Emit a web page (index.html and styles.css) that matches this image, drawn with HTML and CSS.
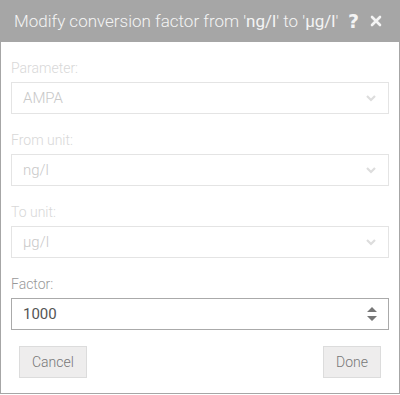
FILE: index.html
```html
<!DOCTYPE html>
<html>
<head>
<meta charset="utf-8">
<link rel="stylesheet" href="styles.css">
</head>
<body>
<div class="dialog">
  <div class="header">
    <div class="title">Modify conversion factor from '<span class="val">ng/l</span>' to '<span class="val">µg/l</span>'</div>
    <div class="tools">
      <span class="tool">?</span>
      <svg class="tool-x" width="12" height="12" viewBox="0 0 12 12"><path d="M2 2 L10 10 M10 2 L2 10" stroke="#f4f4f4" stroke-width="2.6" stroke-linecap="round"/></svg>
    </div>
  </div>
  <div class="body">
    <div class="field disabled">
      <label>Parameter:</label>
      <div class="box"><span>AMPA</span><svg class="chev" width="10" height="8" viewBox="0 0 10 8"><path d="M1 2 L5 6 L9 2" fill="none" stroke="#ddd" stroke-width="2.2"/></svg></div>
    </div>
    <div class="field disabled">
      <label>From unit:</label>
      <div class="box"><span>ng/l</span><svg class="chev" width="10" height="8" viewBox="0 0 10 8"><path d="M1 2 L5 6 L9 2" fill="none" stroke="#ddd" stroke-width="2.2"/></svg></div>
    </div>
    <div class="field disabled">
      <label>To unit:</label>
      <div class="box"><span>µg/l</span><svg class="chev" width="10" height="8" viewBox="0 0 10 8"><path d="M1 2 L5 6 L9 2" fill="none" stroke="#ddd" stroke-width="2.2"/></svg></div>
    </div>
    <div class="field active last">
      <label>Factor:</label>
      <div class="box"><span>1000</span><svg class="spin" width="10" height="16" viewBox="0 0 10 16"><path d="M5 1 L10 6 L0 6 Z M0 10 L10 10 L5 15 Z" fill="#777"/></svg></div>
    </div>
    <div class="buttons">
      <button class="btn">Cancel</button>
      <button class="btn">Done</button>
    </div>
  </div>
</div>
</body>
</html>
```
FILE: styles.css
```css
* { box-sizing: border-box; }
html, body { margin: 0; padding: 0; background: #fff; }
body { font-family: Roboto, "Liberation Sans", sans-serif; }
.dialog {
  width: 400px;
  height: 394px;
  border: 1px solid #a6a6a6;
  border-top: none;
  display: flex;
  flex-direction: column;
}
.header {
  height: 42px;
  background: #a6a6a6;
  margin: 0 -1px;
  display: flex;
  align-items: center;
  padding: 0 18px 0 14px;
  color: #f4f4f4;
}
.title { flex: 1; font-size: 17px; font-weight: 300; white-space: nowrap; }
.title .val { font-weight: 400; }
.tools { display: flex; align-items: center; gap: 11px; }
.tool { font-size: 19px; font-weight: 900; font-family: "DejaVu Sans", sans-serif; }
.tool-x { display: block; }
.body {
  flex: 1;
  padding: 19px 10px 0 10px;
  display: flex;
  flex-direction: column;
}
.field { display: flex; flex-direction: column; margin-bottom: 19px; }
.field.last { margin-bottom: 16px; }
.field label { font-size: 14px; font-weight: 300; height: 21px; line-height: 14px; }
.box {
  height: 32px;
  border: 1px solid #e4e4e4;
  display: flex;
  align-items: center;
  justify-content: space-between;
  padding: 0 10px 0 11px;
  font-size: 15px;
  font-weight: 300;
}
.disabled label { color: #d8d8d8; }
.disabled .box { color: #c8c8c8; }
.active label { color: #999; }
.active .box { border-color: #aaa; color: #555; font-weight: 400; }
.chev { margin-right: 2px; }
.spin { margin-right: 1px; }
.buttons {
  display: flex;
  justify-content: space-between;
  padding: 0 8px;
}
.btn {
  height: 32px;
  padding: 0 12px;
  background: #eeeded;
  border: 1px solid #dcdcdc;
  font-family: Roboto, "Liberation Sans", sans-serif;
  font-size: 14px;
  font-weight: 300;
  color: #777;
}
```
